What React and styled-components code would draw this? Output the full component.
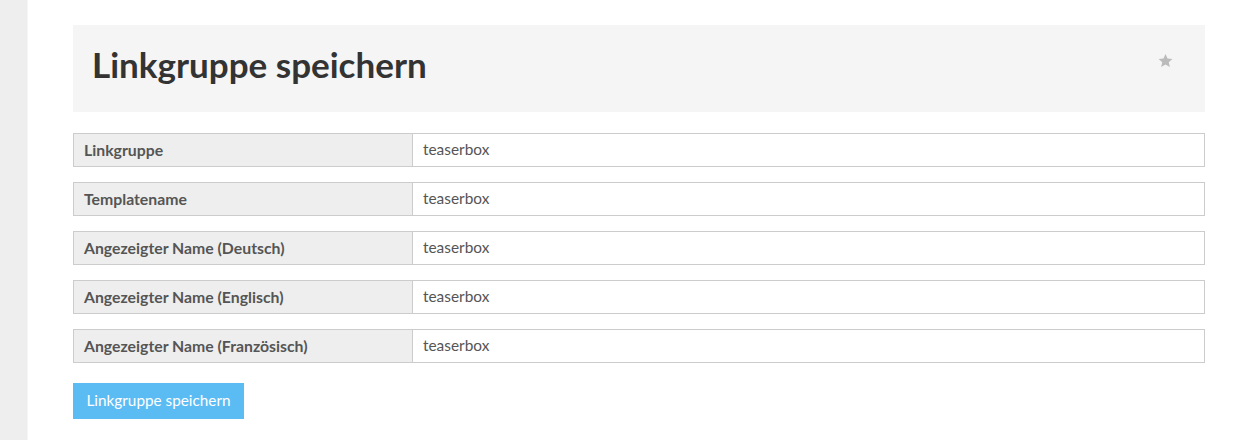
import React from "react";
import styled, { createGlobalStyle } from "styled-components";

const Global = createGlobalStyle`
  html, body { margin: 0; padding: 0; background: #fff; }
  body { font-family: Lato, "Open Sans", sans-serif; color: #333; }
`;

const Page = styled.div`
  display: flex;
  min-height: 440px;
`;

const Sidebar = styled.div`
  width: 27px;
  flex: none;
  background: #eeeeee;
  border-right: 1px solid #f6f6f6;
`;

const Main = styled.main`
  flex: 1;
  padding: 25px 31px 20px 45px;
`;

const Header = styled.div`
  display: flex;
  align-items: center;
  justify-content: space-between;
  height: 87px;
  background: #f5f5f5;
  padding: 0 32px 0 19px;
  box-sizing: border-box;
`;

const Title = styled.h1`
  margin: 0;
  font-size: 35px;
  font-weight: 700;
  color: #333;
  position: relative;
  top: -5px;
`;

const Star = styled.svg`
  width: 15px;
  height: 15px;
  fill: #bbbbbb;
  position: relative;
  top: -8px;
`;

const Form = styled.div`
  display: flex;
  flex-direction: column;
  gap: 15px;
  margin-top: 21px;
`;

const Row = styled.div`
  display: grid;
  grid-template-columns: 339px 1fr;
  height: 34px;
  border: 1px solid #cccccc;
  box-sizing: border-box;
`;

const Label = styled.div`
  background: #eeeeee;
  border-right: 1px solid #cccccc;
  display: flex;
  align-items: center;
  padding: 0 10px;
  font-size: 15.8px;
  font-weight: 700;
  color: #555;
  padding-bottom: 2px;
`;

const Value = styled.div`
  display: flex;
  align-items: center;
  padding: 0 10px;
  font-size: 15.4px;
  color: #555;
  padding-bottom: 2px;
`;

const Button = styled.button`
  margin-top: 5px;
  align-self: flex-start;
  width: 171px;
  height: 36px;
  border: none;
  background: #5bbcf4;
  color: #fff;
  font-family: Lato, "Open Sans", sans-serif;
  font-size: 15.3px;
  padding: 0 0 2px;
  cursor: pointer;
`;

const fields = [
  ["Linkgruppe", "teaserbox"],
  ["Templatename", "teaserbox"],
  ["Angezeigter Name (Deutsch)", "teaserbox"],
  ["Angezeigter Name (Englisch)", "teaserbox"],
  ["Angezeigter Name (Französisch)", "teaserbox"],
];

export default function App() {
  return (
    <>
      <Global />
      <Page>
        <Sidebar />
        <Main>
          <Header>
            <Title>Linkgruppe speichern</Title>
            <Star viewBox="0 0 24 24">
              <path d="M12 1.5l3.2 7.1 7.8.8-5.8 5.2 1.7 7.7L12 18.3l-6.9 4 1.7-7.7L1 9.4l7.8-.8z" />
            </Star>
          </Header>
          <Form>
            {fields.map(([l, v]) => (
              <Row key={l}>
                <Label>{l}</Label>
                <Value>{v}</Value>
              </Row>
            ))}
            <Button>Linkgruppe speichern</Button>
          </Form>
        </Main>
      </Page>
    </>
  );
}
